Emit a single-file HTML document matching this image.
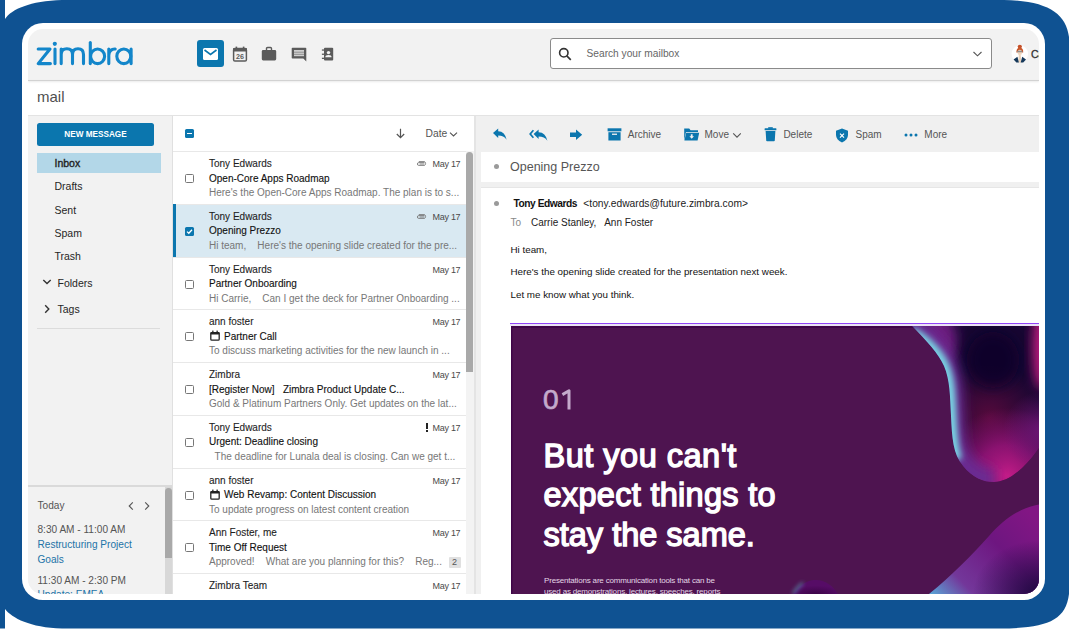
<!DOCTYPE html>
<html><head><meta charset="utf-8">
<style>
*{box-sizing:border-box;margin:0;padding:0}
html,body{width:1069px;height:631px;overflow:hidden;background:#fff;font-family:"Liberation Sans",sans-serif;}
.a{position:absolute;white-space:nowrap;line-height:1}
#bg{position:absolute;left:0;top:0}
#ring{position:absolute;left:22px;top:23px;width:1023px;height:577px;background:#fff;border-radius:21px}
#app{position:absolute;left:28px;top:29px;width:1011px;height:565px;background:#f2f2f2;border-radius:15px;overflow:hidden}
#pg{position:absolute;left:-28px;top:-29px;width:1069px;height:631px}
.ico{position:absolute}
.nav{font-size:10.5px;color:#262626}
.row{position:absolute;left:173px;width:293px;height:53px;box-shadow:inset 0 1px 0 #e8e8e8;background:#fff}
.row .s{position:absolute;left:36px;top:7px;font-size:10px;color:#1e1e1e;white-space:nowrap;-webkit-text-stroke:0.1px #1e1e1e}
.row .j{position:absolute;left:36px;top:21.5px;font-size:10px;color:#111;white-space:nowrap;-webkit-text-stroke:0.12px #111}
.row .p{position:absolute;left:36px;top:36px;font-size:10px;color:#777;white-space:nowrap}
.row .d{position:absolute;right:5.7px;top:8px;font-size:9px;color:#4a4a4a;letter-spacing:-0.3px;white-space:nowrap}
.row .cb{position:absolute;left:12px;top:23px;width:9px;height:9px;border:1px solid #777;border-radius:1.5px;background:#fff}
.tb{position:absolute;top:128px;font-size:10.3px;color:#555;white-space:nowrap}
.row.sel{background:#d9e9f2;box-shadow:inset 3px 0 0 #0b76ae, inset 0 1px 0 #e8e8e8}
.row .cbs{position:absolute;left:12px;top:23px;width:9px;height:9px;background:#0b76ae;border-radius:1.5px}
.row .clip{position:absolute;left:243px;top:10px}
.row .excl{position:absolute;left:253px;top:8.5px;width:2px;height:6px;background:#222}
.row .excl2{position:absolute;left:253px;top:15.5px;width:2px;height:2px;background:#222}
.row .badge{position:absolute;left:275.5px;top:36.5px;width:12px;height:11px;background:#e0e0e0;border-radius:1px;font-size:9px;color:#555;text-align:center;line-height:11px}
.tbt{font-size:10px;color:#555}
</style></head>
<body>
<svg id="bg" width="1069" height="631" viewBox="0 0 1069 631">
  <path d="M0,0 L5,0 L5,19 C12,9 30,1 62,0 L1004,0 C1052,1 1069.5,16 1069.5,45 L1069.5,585 C1069.5,620 1050,628 1000,628.5 L62,628.5 C30,627.6 12,618 5,609 L5,628.5 L0,628.5 Z" fill="#0f5292"/>
</svg>
<div id="ring"></div>
<div id="app"><div id="pg">
  <!-- header -->
  <div class="a" style="left:28px;top:81px;width:1011px;height:34px;background:#fff"></div>
  <div class="a" style="left:28px;top:79.5px;width:1011px;height:1.5px;background:#d2d2d2;box-shadow:0 1px 2px rgba(0,0,0,0.12)"></div>
  <div class="a" style="left:37px;top:89px;font-size:15px;color:#4f4f4f;line-height:1">mail</div>
  <div class="a" style="left:28px;top:115px;width:1011px;height:1px;background:#e3e3e3"></div>

  <!-- logo -->
  <svg class="ico" style="left:0;top:0" width="140" height="75" viewBox="0 0 140 75">
    <g fill="none" stroke="#1386ca" stroke-width="3.1" stroke-linecap="round" stroke-linejoin="round">
      <path d="M38.2,49 H50 L38.2,63.6 H50.4"/>
      <path d="M55,49 V63.6"/>
      <path d="M61.2,49 V63.6 M61.2,54.6 Q61.2,48.7 66.9,48.7 Q72.5,48.7 72.5,54.6 V63.6 M72.5,54.6 Q72.5,48.7 78,48.7 Q83.5,48.7 83.5,54.6 V63.6"/>
      <path d="M90.3,42.6 V63.6"/>
      <ellipse cx="97.6" cy="56.3" rx="7" ry="7.3"/>
      <path d="M108.8,49 V63.6 M108.8,55 Q109.5,48.8 115.2,49"/>
      <ellipse cx="123.8" cy="56.3" rx="7" ry="7.3"/>
      <path d="M131.1,49 V63.6"/>
    </g>
    <circle cx="54.8" cy="43.8" r="2.1" fill="#1386ca"/>
  </svg>

  <!-- app icons -->
  <div class="a" style="left:197px;top:40px;width:27px;height:27px;background:#0b76ae;border-radius:3px"></div>
  <svg class="ico" style="left:202px;top:47px" width="17" height="14" viewBox="0 0 17 14">
    <rect x="1" y="1" width="15" height="12" rx="1.5" fill="#fff"/>
    <path d="M2.5,3 L8.5,7.5 L14.5,3" stroke="#0b76ae" stroke-width="1.6" fill="none"/>
  </svg>

  <!-- search -->
  <div class="a" style="left:550px;top:38px;width:442px;height:31px;background:#fff;border:1px solid #8a8a8a;border-radius:3px"></div>
  <div class="a" style="left:586.5px;top:48.5px;font-size:10.2px;color:#666">Search your mailbox</div>


  <!-- calendar icon -->
  <svg class="ico" style="left:232px;top:46px" width="16" height="16" viewBox="0 0 16 16">
    <rect x="1.6" y="2.6" width="12.8" height="12.4" rx="1.3" fill="none" stroke="#5b5b5b" stroke-width="1.5"/>
    <rect x="1" y="2" width="14" height="3.4" rx="1" fill="#5b5b5b"/>
    <rect x="3.6" y="0.6" width="1.6" height="3" fill="#5b5b5b"/>
    <rect x="10.8" y="0.6" width="1.6" height="3" fill="#5b5b5b"/>
    <text x="8" y="13.1" font-size="7.2" font-weight="bold" text-anchor="middle" fill="#5b5b5b" font-family="Liberation Sans">26</text>
  </svg>
  <!-- briefcase -->
  <svg class="ico" style="left:261px;top:46px" width="16" height="16" viewBox="0 0 16 16">
    <path d="M5.5,4 V2.6 Q5.5,1.5 6.6,1.5 H9.4 Q10.5,1.5 10.5,2.6 V4" fill="none" stroke="#5b5b5b" stroke-width="1.4"/>
    <rect x="0.8" y="4" width="14.4" height="10.4" rx="1.4" fill="#5b5b5b"/>
  </svg>
  <!-- chat -->
  <svg class="ico" style="left:291px;top:46.5px" width="16" height="15" viewBox="0 0 16 15">
    <path d="M1.5,0.8 H14.5 Q15.3,0.8 15.3,1.6 V14.5 L12.3,11.5 H1.5 Q0.7,11.5 0.7,10.7 V1.6 Q0.7,0.8 1.5,0.8 Z" fill="#5b5b5b"/>
    <rect x="3" y="3" width="10" height="6.2" fill="#cfcfcf"/>
    <rect x="3" y="4.8" width="10" height="0.7" fill="#7a7a7a"/>
    <rect x="3" y="6.9" width="10" height="0.7" fill="#7a7a7a"/>
  </svg>
  <!-- contacts -->
  <svg class="ico" style="left:320px;top:46px" width="15" height="16" viewBox="0 0 15 16">
    <rect x="4" y="1.7" width="9.2" height="12.9" rx="1" fill="#5b5b5b"/>
    <rect x="1.9" y="3.4" width="2.6" height="1.3" fill="#5b5b5b"/>
    <rect x="1.9" y="7.6" width="2.6" height="1.3" fill="#5b5b5b"/>
    <rect x="1.9" y="11.7" width="2.6" height="1.3" fill="#5b5b5b"/>
    <circle cx="8.5" cy="6.6" r="1.7" fill="#f2f2f2"/>
    <path d="M5.3,11.2 Q5.3,9.1 8.5,9.1 Q11.6,9.1 11.6,11.2 Z" fill="#f2f2f2"/>
  </svg>
  <!-- search icon -->
  <svg class="ico" style="left:558px;top:47px" width="14" height="14" viewBox="0 0 14 14">
    <circle cx="5.8" cy="5.8" r="4.2" fill="none" stroke="#333" stroke-width="1.6"/>
    <path d="M8.8,8.8 L12.8,12.8" stroke="#333" stroke-width="1.7"/>
  </svg>
  <svg class="ico" style="left:972px;top:50px" width="11" height="8" viewBox="0 0 11 8">
    <path d="M1.5,2 L5.5,5.8 L9.5,2" fill="none" stroke="#555" stroke-width="1.1"/>
  </svg>
  <!-- avatar -->
  <svg class="ico" style="left:1010px;top:44px" width="20" height="20" viewBox="0 0 20 20">
    <circle cx="9.8" cy="9.8" r="8.3" fill="#fff"/>
    <ellipse cx="9.8" cy="2.6" rx="2.1" ry="1.9" fill="#c5512a"/>
    <path d="M6.4,8.6 Q6,4 9.8,3.6 Q13.6,4 13.2,8.6 Z" fill="#c9582c"/>
    <ellipse cx="9.8" cy="8.4" rx="2.3" ry="2.6" fill="#efd5bd"/>
    <rect x="7.2" y="6.8" width="5.2" height="1.5" rx="0.5" fill="#8d8d8d"/>
    <path d="M8.9,10.5 H10.7 L11.4,18.6 H8.2 Z" fill="#ecd4bc"/>
    <path d="M3.6,15.4 L7.4,12.8 L8.9,18.4 L6.4,18.6 Z" fill="#15385a"/>
    <path d="M16,15.4 L12.2,12.8 L10.7,18.4 L13.2,18.6 Z" fill="#15385a"/>
  </svg>
  <div class="a" style="left:1031px;top:49px;font-size:10.5px;color:#333;-webkit-text-stroke:0.3px #333">Ca</div>

  <!-- sidebar -->
  <div class="a" style="left:28px;top:116px;width:144px;height:478px;background:#f2f2f2"></div>
  <div class="a" style="left:172px;top:116px;width:1px;height:478px;background:#e0e0e0"></div>
  <div class="a" style="left:37px;top:122.5px;width:117px;height:23px;background:#0b76ae;border-radius:2.5px"></div>
  <div class="a" style="left:37px;top:130.6px;width:117px;text-align:center;font-size:8.2px;font-weight:bold;color:#fff">NEW MESSAGE</div>
  <div class="a" style="left:37px;top:152.5px;width:123.5px;height:20.5px;background:#b3d7e8"></div>
  <div class="a nav" style="left:54.5px;top:157.5px;color:#222;-webkit-text-stroke:0.35px #222">Inbox</div>
  <div class="a nav" style="left:54.5px;top:180.5px">Drafts</div>
  <div class="a nav" style="left:54.5px;top:204.5px">Sent</div>
  <div class="a nav" style="left:54.5px;top:228px">Spam</div>
  <div class="a nav" style="left:54.5px;top:251px">Trash</div>
  <div class="a nav" style="left:57.5px;top:277.5px">Folders</div>
  <div class="a nav" style="left:57.5px;top:304px">Tags</div>
  <div class="a" style="left:37px;top:327.5px;width:123px;height:1px;background:#dcdcdc"></div>


  <svg class="ico" style="left:42px;top:278px" width="10" height="8" viewBox="0 0 10 8">
    <path d="M1.3,2 L5,5.6 L8.7,2" fill="none" stroke="#333" stroke-width="1.4"/>
  </svg>
  <svg class="ico" style="left:43px;top:304px" width="8" height="10" viewBox="0 0 8 10">
    <path d="M2.2,1.3 L5.8,5 L2.2,8.7" fill="none" stroke="#333" stroke-width="1.4"/>
  </svg>
  <svg class="ico" style="left:127px;top:501px" width="8" height="10" viewBox="0 0 8 10">
    <path d="M5.8,1.3 L2.2,5 L5.8,8.7" fill="none" stroke="#555" stroke-width="1.1"/>
  </svg>
  <svg class="ico" style="left:143px;top:501px" width="8" height="10" viewBox="0 0 8 10">
    <path d="M2.2,1.3 L5.8,5 L2.2,8.7" fill="none" stroke="#555" stroke-width="1.1"/>
  </svg>
  <div class="a" style="left:28px;top:485px;width:144px;height:2px;background:#dadada"></div>
  <div class="a nav" style="left:37.5px;top:500.8px;color:#555;font-size:10.1px">Today</div>
  <div class="a nav" style="left:37.5px;top:525.3px;color:#555;font-size:10.1px">8:30 AM - 11:00 AM</div>
  <div class="a nav" style="left:37.5px;top:540.3px;color:#2273a7;font-size:10.1px">Restructuring Project</div>
  <div class="a nav" style="left:37.5px;top:554.8px;color:#2273a7;font-size:10.1px">Goals</div>
  <div class="a nav" style="left:37.5px;top:575.8px;color:#555;font-size:10.1px">11:30 AM - 2:30 PM</div>
  <div class="a nav" style="left:37.5px;top:590.3px;color:#2273a7;font-size:10.1px">Update: EMEA</div>
  <div class="a" style="left:165px;top:487px;width:7px;height:107px;background:#d8d8d8"></div>
  <div class="a" style="left:165px;top:487.5px;width:7px;height:70px;background:#a9a9a9;border-radius:3.5px 3.5px 0 0"></div>

  <!-- message list -->
  <div class="a" style="left:173px;top:116px;width:301px;height:478px;background:#fff"></div>
  <div class="a" style="left:173px;top:150.5px;width:301px;height:1px;background:#e3e3e3"></div>
  <div class="a" style="left:185px;top:128.6px;width:9px;height:9px;background:#0b76ae;border-radius:1.5px"></div>
  <div class="a" style="left:187px;top:132.5px;width:5px;height:1.3px;background:#fff"></div>

  <svg class="ico" style="left:395px;top:128px" width="11" height="11" viewBox="0 0 11 11">
    <path d="M5.5,0.8 V9.6 M1.8,6 L5.5,9.7 L9.2,6" fill="none" stroke="#555" stroke-width="1.2"/>
  </svg>
  <svg class="ico" style="left:449px;top:131px" width="9" height="7" viewBox="0 0 9 7">
    <path d="M1,1.6 L4.5,5 L8,1.6" fill="none" stroke="#555" stroke-width="1.1"/>
  </svg>
  <div class="a" style="left:425.5px;top:129px;font-size:10.3px;color:#555">Date</div>

  <div class="row" style="top:151.20px"><div class="cb"></div><div class="s">Tony Edwards</div><div class="j">Open-Core Apps Roadmap</div><div class="p">Here's the Open-Core Apps Roadmap. The plan is to s...</div><div class="d">May 17</div><svg class="clip" width="11" height="6" viewBox="0 0 11 6"><path d="M8.5,1.6 H2.8 A1.4,1.4 0 0 0 2.8,4.4 H8.6 A2.3,2.3 0 0 0 8.6,0.6 H2.8 M3.6,3 H8.4" stroke="#777" stroke-width="0.9" fill="none"/></svg></div>
  <div class="row sel" style="top:203.95px"><div class="cbs"><svg width="9" height="9" viewBox="0 0 9 9" style="position:absolute;left:0;top:0"><path d="M2,4.6 L3.8,6.3 L7,2.8" stroke="#fff" stroke-width="1.3" fill="none"/></svg></div><div class="s">Tony Edwards</div><div class="j">Opening Prezzo</div><div class="p">Hi team,&nbsp;&nbsp;&nbsp;&nbsp;Here's the opening slide created for the pre...</div><div class="d">May 17</div><svg class="clip" width="11" height="6" viewBox="0 0 11 6"><path d="M8.5,1.6 H2.8 A1.4,1.4 0 0 0 2.8,4.4 H8.6 A2.3,2.3 0 0 0 8.6,0.6 H2.8 M3.6,3 H8.4" stroke="#777" stroke-width="0.9" fill="none"/></svg></div>
  <div class="row" style="top:256.70px"><div class="cb"></div><div class="s">Tony Edwards</div><div class="j">Partner Onboarding</div><div class="p">Hi Carrie,&nbsp;&nbsp;&nbsp;&nbsp;Can I get the deck for Partner Onboarding ...</div><div class="d">May 17</div></div>
  <div class="row" style="top:309.45px"><div class="cb"></div><div class="s">ann foster</div><div class="j"><span style="position:relative;padding-left:15px"><svg style="position:absolute;left:1px;top:-0.5px" width="10" height="11" viewBox="0 0 10 11"><rect x="0.8" y="2.6" width="8.4" height="7.6" rx="1" fill="none" stroke="#222" stroke-width="1.3"/><rect x="0.5" y="2" width="9" height="2.4" rx="0.8" fill="#222"/><rect x="2.2" y="0.6" width="1.3" height="2" fill="#222"/><rect x="6.5" y="0.6" width="1.3" height="2" fill="#222"/></svg>Partner Call</span></div><div class="p">To discuss marketing activities for the new launch in ...</div><div class="d">May 17</div></div>
  <div class="row" style="top:362.20px"><div class="cb"></div><div class="s">Zimbra</div><div class="j">[Register Now]&nbsp;&nbsp;&nbsp;Zimbra Product Update C...</div><div class="p">Gold &amp; Platinum Partners Only. Get updates on the lat...</div><div class="d">May 17</div></div>
  <div class="row" style="top:414.95px"><div class="cb"></div><div class="s">Tony Edwards</div><div class="j">Urgent: Deadline closing</div><div class="p">&nbsp;&nbsp;The deadline for Lunala deal is closing. Can we get t...</div><div class="d">May 17</div><div class="excl"></div><div class="excl2"></div></div>
  <div class="row" style="top:467.70px"><div class="cb"></div><div class="s">ann foster</div><div class="j"><span style="position:relative;padding-left:15px"><svg style="position:absolute;left:1px;top:-0.5px" width="10" height="11" viewBox="0 0 10 11"><rect x="0.8" y="2.6" width="8.4" height="7.6" rx="1" fill="none" stroke="#222" stroke-width="1.3"/><rect x="0.5" y="2" width="9" height="2.4" rx="0.8" fill="#222"/><rect x="2.2" y="0.6" width="1.3" height="2" fill="#222"/><rect x="6.5" y="0.6" width="1.3" height="2" fill="#222"/></svg>Web Revamp: Content Discussion</span></div><div class="p">To update progress on latest content creation</div><div class="d">May 17</div></div>
  <div class="row" style="top:520.45px"><div class="cb"></div><div class="s">Ann Foster, me</div><div class="j">Time Off Request</div><div class="p">Approved!&nbsp;&nbsp;&nbsp;&nbsp;What are you planning for this?&nbsp;&nbsp;&nbsp;&nbsp;Reg...</div><div class="d">May 17</div><div class="badge">2</div></div>
  <div class="row" style="top:573.20px"><div class="cb"></div><div class="s">Zimbra Team</div><div class="j"></div><div class="p"></div><div class="d">May 17</div></div>
  <div class="a" style="left:474px;top:116px;width:2px;height:478px;background:#e4e4e4"></div>
  <div class="a" style="left:466px;top:151px;width:8px;height:443px;background:#f3f3f3"></div>
  <div class="a" style="left:466px;top:151.5px;width:7px;height:220px;background:#a9a9a9;border-radius:3.5px 3.5px 0 0"></div>

  <!-- reading pane -->
  <div class="a" style="left:476px;top:116px;width:563px;height:478px;background:#f0f0f0"></div>

  <!-- toolbar -->
  <svg class="ico" style="left:492px;top:128px" width="16" height="13" viewBox="0 0 16 13">
    <path d="M1,5 L6.2,0.6 V3.2 Q13,3.4 14.6,11.8 Q11.8,7.6 6.2,7.6 V10 Z" fill="#0b76ae"/>
  </svg>
  <svg class="ico" style="left:529px;top:128.5px" width="20" height="13" viewBox="0 0 20 13">
    <path d="M4.4,1.2 L1.2,5 L4.4,8.8" fill="none" stroke="#0b76ae" stroke-width="1.7"/>
    <path d="M4.6,5 L9.6,0.6 V3.2 Q16.6,3.4 18.4,11.8 Q15.4,7.6 9.6,7.6 V10 Z" fill="#0b76ae"/>
  </svg>
  <svg class="ico" style="left:569px;top:128.5px" width="14" height="12" viewBox="0 0 14 12">
    <path d="M1,3.6 H7 V0.6 L13.2,5.8 L7,11 V8 H1 Z" fill="#0b76ae"/>
  </svg>
  <svg class="ico" style="left:607px;top:128px" width="15" height="13" viewBox="0 0 15 13">
    <rect x="0.6" y="0.3" width="13.8" height="3" fill="#0b76ae"/>
    <rect x="1.4" y="4.2" width="12.2" height="8.3" fill="#0b76ae"/>
    <rect x="5" y="5.6" width="5" height="1.3" fill="#f0f0f0"/>
  </svg>
  <div class="a tbt" style="left:627.8px;top:130px">Archive</div>
  <svg class="ico" style="left:683px;top:128px" width="17" height="13" viewBox="0 0 17 13">
    <path d="M1.2,0.6 H6.2 L7.6,2.2 H15 V4 H3 L1.2,12.4 Z" fill="#0b76ae"/>
    <path d="M3.2,4.8 H16.2 L14.6,12.6 H1.4 Z" fill="#0b76ae"/>
    <path d="M7.8,6.2 H9.6 V8.2 H11 L8.7,10.8 L6.4,8.2 H7.8 Z" fill="#f0f0f0"/>
  </svg>
  <div class="a tbt" style="left:704.5px;top:130px">Move</div>
  <svg class="ico" style="left:731.5px;top:131.5px" width="10" height="7" viewBox="0 0 10 7">
    <path d="M1.2,1.4 L5,5.2 L8.8,1.4" fill="none" stroke="#555" stroke-width="1.1"/>
  </svg>
  <svg class="ico" style="left:764px;top:127px" width="13" height="15" viewBox="0 0 13 15">
    <rect x="0.6" y="1.2" width="11.8" height="2" rx="0.5" fill="#0b76ae"/>
    <rect x="4.2" y="0.2" width="4.6" height="1.6" fill="#0b76ae"/>
    <path d="M1.6,4 H11.4 L10.8,13.4 Q10.7,14.2 9.9,14.2 H3.1 Q2.3,14.2 2.2,13.4 Z" fill="#0b76ae"/>
  </svg>
  <div class="a tbt" style="left:783.4px;top:130px">Delete</div>
  <svg class="ico" style="left:835px;top:127.5px" width="14" height="15" viewBox="0 0 14 15">
    <path d="M7,0.6 L13,2.8 V7 Q13,11.6 7,14.4 Q1,11.6 1,7 V2.8 Z" fill="#0b76ae"/>
    <path d="M5,5.6 L9,9.6 M9,5.6 L5,9.6" stroke="#fff" stroke-width="1.2"/>
  </svg>
  <div class="a tbt" style="left:855.5px;top:130px">Spam</div>
  <svg class="ico" style="left:904px;top:133px" width="14" height="4" viewBox="0 0 14 4">
    <circle cx="2" cy="2" r="1.5" fill="#0b76ae"/><circle cx="7" cy="2" r="1.5" fill="#0b76ae"/><circle cx="12" cy="2" r="1.5" fill="#0b76ae"/>
  </svg>
  <div class="a tbt" style="left:924.3px;top:130px">More</div>
  <div class="a" style="left:481px;top:152px;width:558px;height:30px;background:#fff"></div>
  <div class="a" style="left:493.5px;top:164px;width:5px;height:5px;border-radius:50%;background:#9a9a9a"></div>
  <div class="a" style="left:510px;top:161px;font-size:12.5px;color:#555">Opening Prezzo</div>
  <div class="a" style="left:481px;top:188px;width:558px;height:406px;background:#fff;box-shadow:0 -1px 0 #e6e6e6"></div>

  <!-- message -->
  <div class="a" style="left:493.5px;top:200.5px;width:5px;height:5px;border-radius:50%;background:#9a9a9a"></div>
  <div class="a" style="left:513.5px;top:198.5px;font-size:10.2px;color:#111;font-weight:bold;letter-spacing:-0.45px">Tony Edwards</div>
  <div class="a" style="left:583.3px;top:198.5px;font-size:10.25px;color:#222">&lt;tony.edwards@future.zimbra.com&gt;</div>
  <div class="a" style="left:510.5px;top:217.7px;font-size:10px;color:#888">To</div>
  <div class="a" style="left:531px;top:217.7px;font-size:10px;color:#222">Carrie Stanley,&nbsp;&nbsp; Ann Foster</div>
  <div class="a" style="left:510.5px;top:245px;font-size:9.8px;color:#111">Hi team,</div>
  <div class="a" style="left:510.5px;top:267.4px;font-size:9.8px;color:#111">Here's the opening slide created for the presentation next week.</div>
  <div class="a" style="left:510.5px;top:289.9px;font-size:9.8px;color:#111">Let me know what you think.</div>
  <div class="a" style="left:510px;top:322.8px;width:529px;height:1.4px;background:#9144f8"></div>
  <div class="a" style="left:510px;top:324.2px;width:529px;height:1.6px;background:#ece2f6"></div>
  <div class="a" style="left:511px;top:326px;width:528px;height:268px;background:#4e1450;overflow:hidden;box-shadow:inset 1.5px 2px 0 #3f0548">
    <svg width="528" height="268" viewBox="0 0 528 268" style="position:absolute;left:0;top:0">
      <defs>
        <radialGradient id="tbMaroon" gradientUnits="userSpaceOnUse" cx="478" cy="92" r="55">
          <stop offset="0" stop-color="#560a3c" stop-opacity="1"/>
          <stop offset="1" stop-color="#560a3c" stop-opacity="0"/>
        </radialGradient>
        <radialGradient id="tbMag" gradientUnits="userSpaceOnUse" cx="496" cy="150" r="68">
          <stop offset="0" stop-color="#c41c88" stop-opacity="1"/>
          <stop offset="0.45" stop-color="#9a147a" stop-opacity="0.85"/>
          <stop offset="1" stop-color="#8e1274" stop-opacity="0"/>
        </radialGradient>
        <radialGradient id="tbPurp" gradientUnits="userSpaceOnUse" cx="532" cy="105" r="40">
          <stop offset="0" stop-color="#6e1676" stop-opacity="1"/>
          <stop offset="1" stop-color="#6e1676" stop-opacity="0"/>
        </radialGradient>
        <radialGradient id="tbPink" gradientUnits="userSpaceOnUse" cx="534" cy="6" r="26">
          <stop offset="0" stop-color="#d41c88" stop-opacity="1"/>
          <stop offset="1" stop-color="#d41c88" stop-opacity="0"/>
        </radialGradient>
        <filter id="blur6" x="-50%" y="-50%" width="200%" height="200%"><feGaussianBlur stdDeviation="6"/></filter>
        <filter id="blur3" x="-50%" y="-50%" width="200%" height="200%"><feGaussianBlur stdDeviation="3"/></filter>
        <clipPath id="tbClip"><path id="tbPath" d="M401,0 C415,14 428,28 433,40 C439,54 439,70 440,90 C441,112 442,128 452,140 C462,152 472,156 483,156 C498,156 514,142 528,122 L528,0 Z"/></clipPath>
        <filter id="blur2" x="-50%" y="-50%" width="200%" height="200%"><feGaussianBlur stdDeviation="2.2"/></filter>
        <linearGradient id="bbBase" x1="0" y1="1" x2="1" y2="0.2">
          <stop offset="0" stop-color="#58a8d8"/>
          <stop offset="0.25" stop-color="#73379a"/>
          <stop offset="0.65" stop-color="#6e1680"/>
          <stop offset="1" stop-color="#821684"/>
        </linearGradient>
        <radialGradient id="bbDark" cx="1" cy="1" r="0.6">
          <stop offset="0" stop-color="#1e0840" stop-opacity="1"/>
          <stop offset="1" stop-color="#1e0840" stop-opacity="0"/>
        </radialGradient>
        <radialGradient id="sbBase" cx="0.5" cy="1" r="0.6">
          <stop offset="0" stop-color="#3c0448"/>
          <stop offset="1" stop-color="#560c66"/>
        </radialGradient>
      </defs>
      <g clip-path="url(#tbClip)">
        <rect x="380" y="0" width="150" height="160" fill="#170632"/>
        <rect x="380" y="0" width="150" height="160" fill="url(#tbMaroon)"/>
        <rect x="380" y="0" width="150" height="160" fill="url(#tbMag)"/>
        <rect x="380" y="0" width="150" height="160" fill="url(#tbPurp)"/>
        <ellipse cx="531" cy="22" rx="9" ry="42" fill="#c41a82" filter="url(#blur6)"/>
        <ellipse cx="428" cy="14" rx="18" ry="26" fill="#6c1c7e" filter="url(#blur6)"/>
        <ellipse cx="482" cy="34" rx="26" ry="28" fill="#10042a" filter="url(#blur6)" opacity="0.85"/>
        <path d="M398,-4 C415,14 428,28 433,40 C439,54 439,70 440,90 C441,112 442,128 452,140 C462,152 472,156 483,156" fill="none" stroke="#6a2a92" stroke-width="26" filter="url(#blur6)"/>
        <path d="M400,6 C415,14 428,28 433,40 C439,54 439,70 440,90 C441,112 442,124 446,134" fill="none" stroke="#78d8e4" stroke-width="11" filter="url(#blur3)"/>
      </g>
      <path d="M418,268 C440,250 460,230 478,210 C492,194 508,182 528,178.5 L528,268 Z" fill="url(#bbBase)"/>
      <path d="M418,268 C440,250 460,230 478,210 C492,194 508,182 528,178.5 L528,268 Z" fill="url(#bbDark)"/>
      <path d="M282,268 C288,260 294,255 303,254 C314,253 322,260 327,268 Z" fill="url(#sbBase)"/>
      <path d="M282,268 C286,262 289,259 292,257" fill="none" stroke="#5ec6dc" stroke-width="1.6" filter="url(#blur2)" opacity="0.9"/>
    </svg>
    <div class="a" style="left:32px;top:60px;font-size:28px;color:#c4aacb;-webkit-text-stroke:0.7px #c4aacb">0</div>
    <svg class="ico" style="left:48px;top:60px" width="16" height="26" viewBox="0 0 16 26"><path d="M3.4,8.6 L10,4.8 V23.6" fill="none" stroke="#c4aacb" stroke-width="3" stroke-linejoin="round"/></svg>
    <div class="a" style="left:32.5px;top:110.5px;font-size:32.5px;color:#fff;line-height:39.6px;-webkit-text-stroke:1.4px #fff"><span style="letter-spacing:0.5px">But you can't</span><br><span style="letter-spacing:0.3px">expect things to</span><br>stay the same.</div>
    <div class="a" style="left:33px;top:248.6px;font-size:8px;letter-spacing:-0.18px;color:#e3d6e6;line-height:11.3px">Presentations are communication tools that can be<br>used as demonstrations, lectures, speeches, reports</div>
  </div>
</div></div>
</body></html>
